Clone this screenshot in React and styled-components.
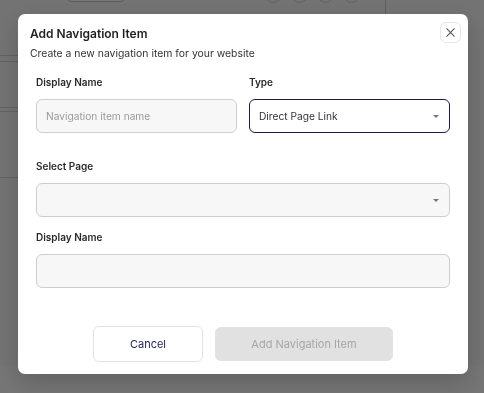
import React from "react";
import styled, { createGlobalStyle } from "styled-components";

const GlobalStyle = createGlobalStyle`
  * { box-sizing: border-box; }
  body {
    margin: 0;
    font-family: Inter, "Noto Sans", sans-serif;
    background: #ffffff;
    overflow: hidden;
  }
`;

const Page = styled.div`
  width: 484px;
  height: 393px;
  background: #fafafa;
`;

const Toolbar = styled.div`
  display: flex;
  align-items: flex-end;
  height: 30px;
  margin-top: -28px;
  padding-left: 66px;
  gap: 10px;
`;

const GhostButton = styled.div`
  width: 60px;
  height: 28px;
  border: 1px solid #c8c8c8;
  border-radius: 6px;
  background: #fff;
`;

const Spacer = styled.div`
  flex: 1;
`;

const Circle = styled.div`
  width: 17px;
  height: 17px;
  border-radius: 50%;
  border: 1px solid #d4d4d4;
  margin-bottom: -1px;
`;

const Circles = styled.div`
  display: flex;
  gap: 9px;
  margin-right: 15px;
`;

const Divider = styled.div`
  width: 1px;
  height: 60px;
  background: #d0d0d0;
  margin-right: 98px;
  align-self: flex-start;
`;

const RowList = styled.div`
  margin-top: 53px;
  width: 18px;
`;

const Row = styled.div`
  height: ${(p) => p.h}px;
  border-bottom: 1px solid #d6d6d6;
`;

const Overlay = styled.div`
  position: fixed;
  inset: 0;
  background: rgba(0, 0, 0, 0.54);
  display: flex;
  align-items: flex-start;
  justify-content: flex-start;
  padding: 14px 0 0 18px;
`;

const Modal = styled.div`
  position: relative;
  width: 450px;
  height: 360px;
  background: #ffffff;
  border-radius: 7px;
  box-shadow: 0 8px 24px rgba(0, 0, 0, 0.18);
  display: flex;
  flex-direction: column;
`;

const Header = styled.div`
  padding: 12px 12px 0;
`;

const Title = styled.h2`
  margin: 0;
  font-size: 12px;
  line-height: 15px;
  font-weight: 600;
  color: #1f1f1f;
`;

const Subtitle = styled.p`
  margin: 6px 0 0;
  font-size: 10.4px;
  line-height: 14px;
  color: #333;
`;

const CloseButton = styled.button`
  position: absolute;
  top: 8px;
  right: 7px;
  width: 21px;
  height: 21px;
  padding: 0;
  border: 1px solid #e6e6e6;
  border-radius: 6px;
  background: #fff;
  display: flex;
  align-items: center;
  justify-content: center;
  color: #555;
`;

const Body = styled.div`
  padding: 14px 18px 0;
  display: flex;
  flex-direction: column;
`;

const Grid = styled.div`
  display: grid;
  grid-template-columns: 1fr 1fr;
  gap: 12px;
`;

const Field = styled.div`
  display: flex;
  flex-direction: column;
  margin-top: ${(p) => p.mt || 0}px;
`;

const Label = styled.label`
  font-size: 10px;
  line-height: 14px;
  font-weight: 600;
  color: #2a2a2a;
  margin-bottom: 10px;
`;

const Input = styled.div`
  height: 34px;
  border-radius: 6px;
  border: 1px solid ${(p) => (p.focused ? "#1c1c50" : "#cdcdcd")};
  background: ${(p) => (p.focused ? "#ffffff" : "#f7f7f7")};
  display: flex;
  align-items: center;
  padding: 0 9px;
  font-size: 10.2px;
  color: ${(p) => (p.placeholder ? "#9a9a9a" : "#333")};
`;

const Value = styled.span`
  flex: 1;
`;

const Caret = styled.span`
  width: 0;
  height: 0;
  border-left: 3.5px solid transparent;
  border-right: 3.5px solid transparent;
  border-top: 3.5px solid #777;
  margin-right: 1px;
`;

const Footer = styled.div`
  margin-top: auto;
  padding-bottom: 12px;
  display: flex;
  justify-content: center;
  align-items: center;
  gap: 12px;
`;

const Button = styled.button`
  height: ${(p) => (p.primary ? 34 : 36)}px;
  width: ${(p) => (p.primary ? 178 : 110)}px;
  border-radius: 6px;
  font-family: Inter, "Noto Sans", sans-serif;
  font-size: 11px;
  border: ${(p) => (p.primary ? "none" : "1px solid #e3e3e3")};
  background: ${(p) => (p.primary ? "#e1e1e1" : "#ffffff")};
  color: ${(p) => (p.primary ? "#a6a6a6" : "#1e1e5a")};
`;

const Select = ({ value, focused }) => (
  <Input focused={focused}>
    <Value>{value}</Value>
    <Caret />
  </Input>
);

export default function App() {
  return (
    <>
      <GlobalStyle />
      <Page>
        <Toolbar>
          <GhostButton />
          <Spacer />
          <Circles>
            <Circle />
            <Circle />
            <Circle />
            <Circle />
          </Circles>
          <Divider />
        </Toolbar>
        <RowList>
          <Row h={1} />
          <Row h={6} />
          <Row h={46} />
          <Row h={4} />
          <Row h={66} />
        </RowList>
      </Page>
      <Overlay>
        <Modal>
          <Header>
            <Title>Add Navigation Item</Title>
            <Subtitle>Create a new navigation item for your website</Subtitle>
          </Header>
          <CloseButton aria-label="Close">
            <svg width="13" height="13" viewBox="0 0 24 24" fill="none" stroke="currentColor" strokeWidth="2" strokeLinecap="round">
              <path d="M5 5l14 14M19 5L5 19" />
            </svg>
          </CloseButton>
          <Body>
            <Grid>
              <Field>
                <Label>Display Name</Label>
                <Input placeholder>Navigation item name</Input>
              </Field>
              <Field>
                <Label>Type</Label>
                <Select value="Direct Page Link" focused />
              </Field>
            </Grid>
            <Field mt={26}>
              <Label>Select Page</Label>
              <Select value="" />
            </Field>
            <Field mt={13}>
              <Label>Display Name</Label>
              <Input />
            </Field>
          </Body>
          <Footer>
            <Button>Cancel</Button>
            <Button primary disabled>Add Navigation Item</Button>
          </Footer>
        </Modal>
      </Overlay>
    </>
  );
}
